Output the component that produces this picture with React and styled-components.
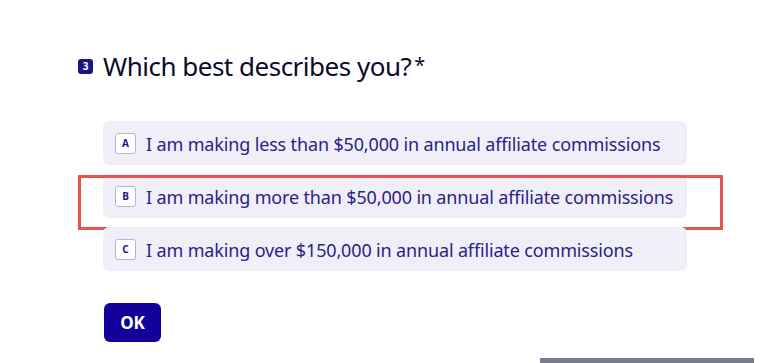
import React, { useState } from 'react';
import styled, { createGlobalStyle } from 'styled-components';

const Global = createGlobalStyle`
    html, body {
        margin: 0;
        padding: 0;
        background: #fff;
    }
    body {
        font-family: 'Noto Sans', 'Liberation Sans', sans-serif;
        overflow: hidden;
    }
`;

const Page = styled.div`
    position: relative;
    width: 768px;
    height: 363px;
    padding: 46px 0 0 78px;
    box-sizing: border-box;
`;

const Question = styled.div`
    display: flex;
    align-items: center;
    gap: 10px;
    height: 40px;
`;

const Number = styled.span`
    display: inline-flex;
    align-items: center;
    justify-content: center;
    width: 15px;
    height: 15px;
    border-radius: 3px;
    background: #1b1485;
    color: #fff;
    font-size: 10px;
    font-weight: 700;
    line-height: 1;
`;

const Title = styled.h1`
    margin: 0;
    font-size: 26px;
    font-weight: 400;
    color: #0c0a2a;
    letter-spacing: -0.5px;
`;

const Required = styled.span`
    display: inline-block;
    margin-left: 3px;
    font-size: 20px;
    vertical-align: 4px;
`;

const Options = styled.div`
    display: flex;
    flex-direction: column;
    gap: 9px;
    margin: 35px 0 0 25px;
    width: 584px;
`;

const Option = styled.div`
    position: relative;
    display: flex;
    align-items: center;
    gap: 10px;
    height: 44px;
    padding: 2px 12px 0;
    box-sizing: border-box;
    border-radius: 6px;
    background: #f0eff8;
    cursor: pointer;
`;

const Key = styled.span`
    display: inline-flex;
    align-items: center;
    justify-content: center;
    width: 21px;
    height: 21px;
    margin-top: -2px;
    box-sizing: border-box;
    border: 1px solid #b6b2dc;
    border-radius: 3px;
    background: #fff;
    color: #1b1485;
    font-size: 10px;
    font-weight: 700;
`;

const Label = styled.span`
    font-size: 18px;
    color: #2a2288;
    letter-spacing: -0.15px;
`;

const Highlight = styled.div`
    position: absolute;
    left: -25px;
    right: -36px;
    top: 1px;
    bottom: -12px;
    border: 3px solid #e8524f;
    pointer-events: none;
`;

const OkButton = styled.button`
    margin: 32px 0 0 26px;
    width: 57px;
    height: 39px;
    border: none;
    border-radius: 6px;
    background: #14009a;
    color: #fff;
    font-family: 'Noto Sans', sans-serif;
    font-size: 17px;
    font-weight: 700;
    cursor: pointer;
`;

const ScrollBar = styled.div`
    position: absolute;
    left: 540px;
    bottom: 0;
    width: 214px;
    height: 5px;
    background: #777b8f;
`;

const choices = [
    { key: 'A', text: 'I am making less than $50,000 in annual affiliate commissions' },
    { key: 'B', text: 'I am making more than $50,000 in annual affiliate commissions' },
    { key: 'C', text: 'I am making over $150,000 in annual affiliate commissions' },
];

export default function App() {
    const [picked, setPicked] = useState(null);

    return (
        <>
            <Global />
            <Page>
                <Question>
                    <Number>3</Number>
                    <Title>
                        Which best describes you?<Required>*</Required>
                    </Title>
                </Question>
                <Options>
                    {choices.map((c) => (
                        <Option key={c.key} onClick={() => setPicked(c.key)}>
                            <Key>{c.key}</Key>
                            <Label>{c.text}</Label>
                            {c.key === 'B' && <Highlight />}
                        </Option>
                    ))}
                </Options>
                <OkButton>OK</OkButton>
                <ScrollBar />
            </Page>
        </>
    );
}
